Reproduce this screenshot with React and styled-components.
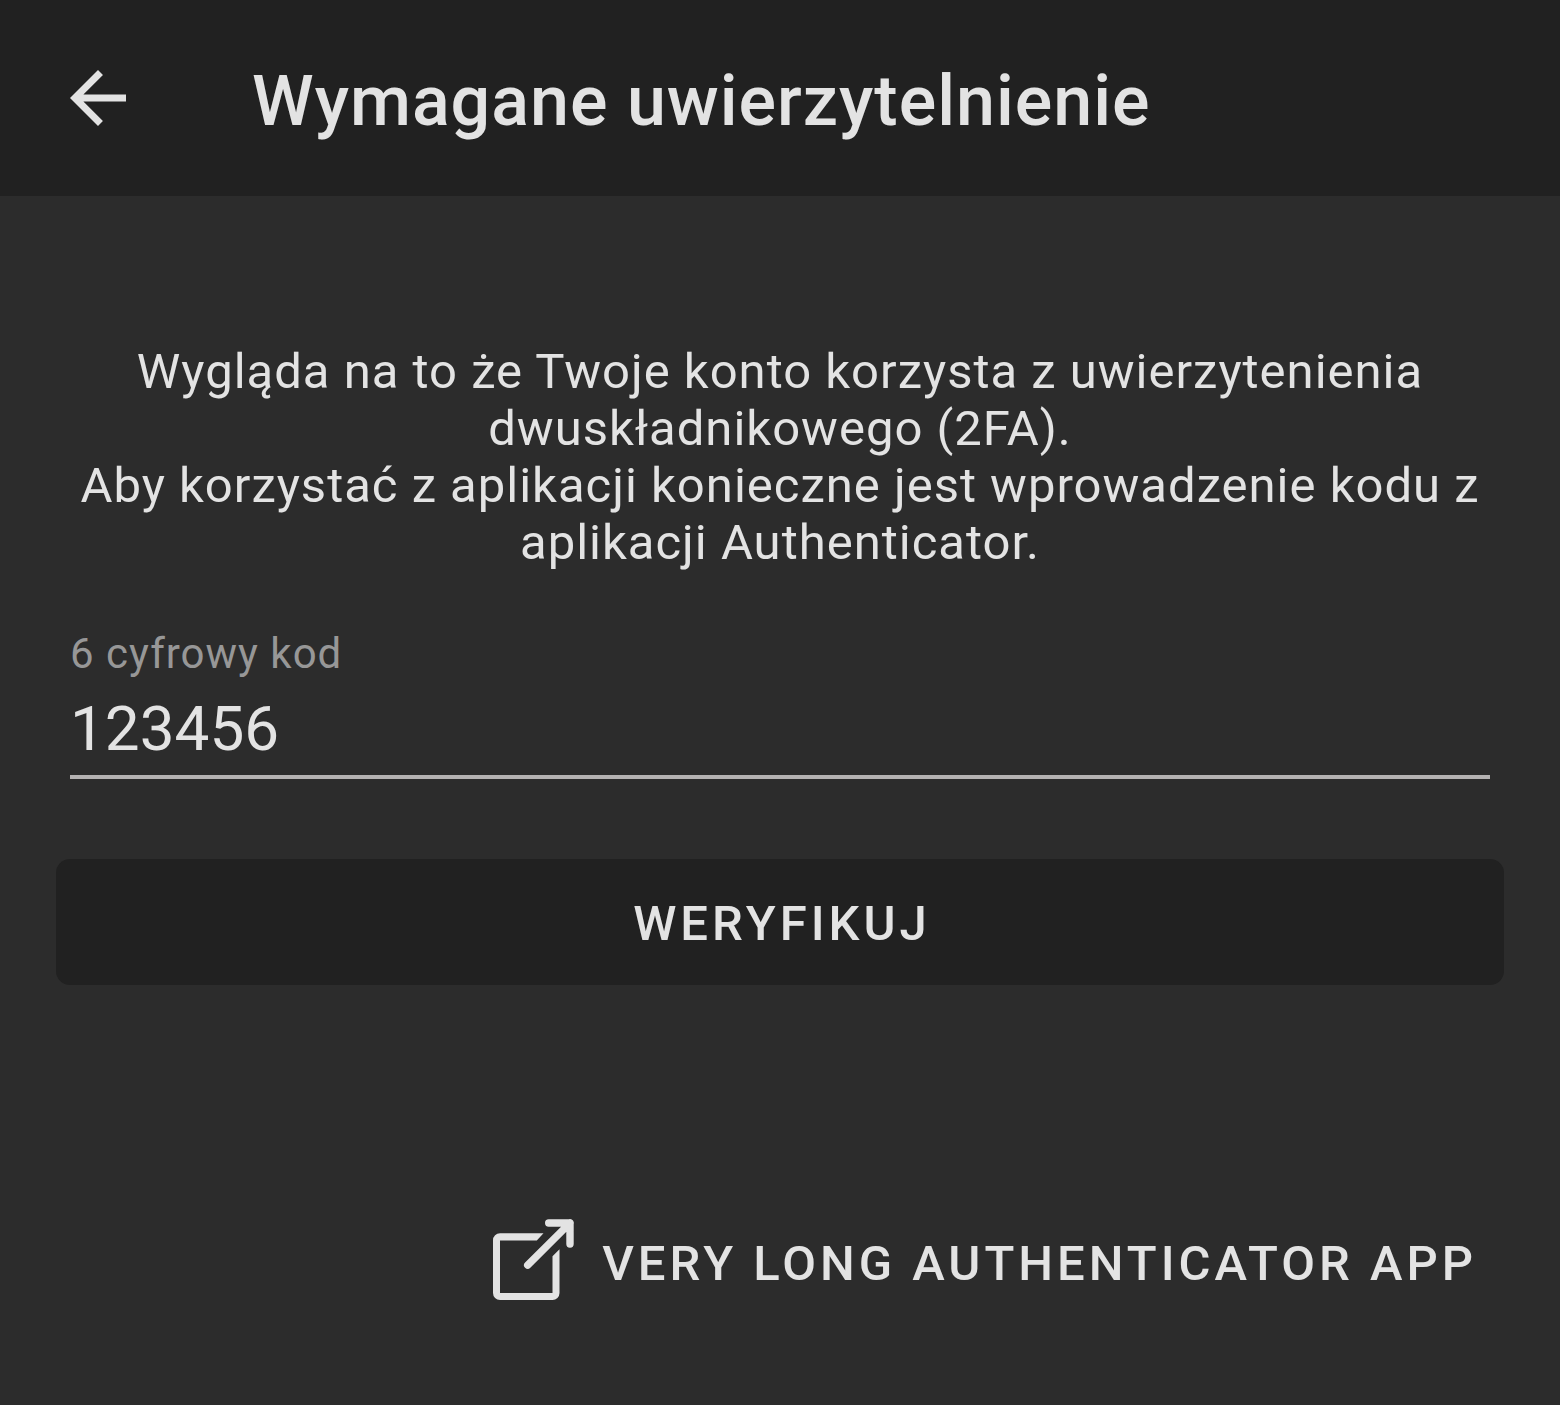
import React, { useState } from "react";
import styled, { createGlobalStyle } from "styled-components";

const Global = createGlobalStyle`
  * { box-sizing: border-box; }
  html, body { margin: 0; background: #2c2c2c; }
  body { font-family: Roboto, "Noto Sans", sans-serif; color: #e3e3e3; }
`;

const Screen = styled.div`
  display: flex;
  flex-direction: column;
  min-height: 100vh;
  background: #2c2c2c;
`;

const AppBar = styled.header`
  display: flex;
  align-items: center;
  gap: 112px;
  height: 196px;
  padding: 0 56px;
  background: #212121;
`;

const IconButton = styled.button`
  display: flex;
  padding: 0;
  border: 0;
  background: none;
  color: inherit;
  cursor: pointer;
`;

const Title = styled.h1`
  margin: 0;
  padding-top: 6px;
  font-size: 70px;
  line-height: 82px;
  font-weight: 500;
  letter-spacing: 1px;
`;

const Content = styled.main`
  display: flex;
  flex: 1;
  flex-direction: column;
  padding: 147px 56px 84px;
`;

const Message = styled.p`
  margin: 0;
  font-size: 49px;
  line-height: 57px;
  letter-spacing: 1px;
  text-align: center;
`;

const Field = styled.div`
  display: flex;
  flex-direction: column;
  margin: 58px 14px 0;
  border-bottom: 4px solid #b4b2b2;
`;

const Label = styled.label`
  font-size: 42px;
  line-height: 50px;
  letter-spacing: 1px;
  color: #979797;
`;

const CodeInput = styled.input`
  width: 100%;
  height: 96px;
  padding: 2px 0 0;
  border: 0;
  outline: 0;
  background: none;
  color: inherit;
  font-family: inherit;
  font-size: 62px;
`;

const Button = styled.button`
  display: flex;
  align-items: center;
  justify-content: center;
  border: 0;
  color: inherit;
  font-family: inherit;
  font-size: 49px;
  line-height: 57px;
  font-weight: 500;
  letter-spacing: 4px;
  text-transform: uppercase;
  cursor: pointer;
`;

const VerifyButton = styled(Button)`
  height: 126px;
  margin-top: 80px;
  padding: 2px 0 0 4px;
  border-radius: 14px;
  background: #212121;
`;

const AppButton = styled(Button)`
  align-self: flex-end;
  gap: 28px;
  margin-top: auto;
  padding: 20px 27px;
  background: none;
`;

const AppName = styled.span`
  padding-top: 6px;
`;

export default function App() {
  const [code, setCode] = useState("123456");
  return (
    <Screen>
      <Global />
      <AppBar>
        <IconButton type="button" aria-label="Wstecz">
          <svg width="84" height="84" viewBox="0 0 24 24" fill="currentColor">
            <path d="M20 11H7.83l5.59-5.59L12 4l-8 8 8 8 1.41-1.41L7.83 13H20v-2z" />
          </svg>
        </IconButton>
        <Title>Wymagane uwierzytelnienie</Title>
      </AppBar>
      <Content>
        <Message>
          Wygląda na to że Twoje konto korzysta z uwierzytenienia dwuskładnikowego (2FA).
          <br />
          Aby korzystać z aplikacji konieczne jest wprowadzenie kodu z aplikacji Authenticator.
        </Message>
        <Field>
          <Label htmlFor="code">6 cyfrowy kod</Label>
          <CodeInput
            id="code"
            inputMode="numeric"
            maxLength={6}
            value={code}
            onChange={(event) => setCode(event.target.value)}
          />
        </Field>
        <VerifyButton type="button">Weryfikuj</VerifyButton>
        <AppButton type="button">
          <svg width="81" height="82" viewBox="0 0 81 82" fill="none">
            <path
              fill="currentColor"
              d="M50.5 14.3H7a7 7 0 0 0-7 7V74a7 7 0 0 0 7 7h52.5a7 7 0 0 0 7-7V30.2l-7 7V74H7V21.5h36.8z"
            />
            <path
              stroke="currentColor"
              strokeWidth="7.4"
              strokeLinecap="round"
              strokeLinejoin="round"
              d="M34.7 46.2L77 4M55.7 4H77V25"
            />
          </svg>
          <AppName>Very long authenticator app</AppName>
        </AppButton>
      </Content>
    </Screen>
  );
}
